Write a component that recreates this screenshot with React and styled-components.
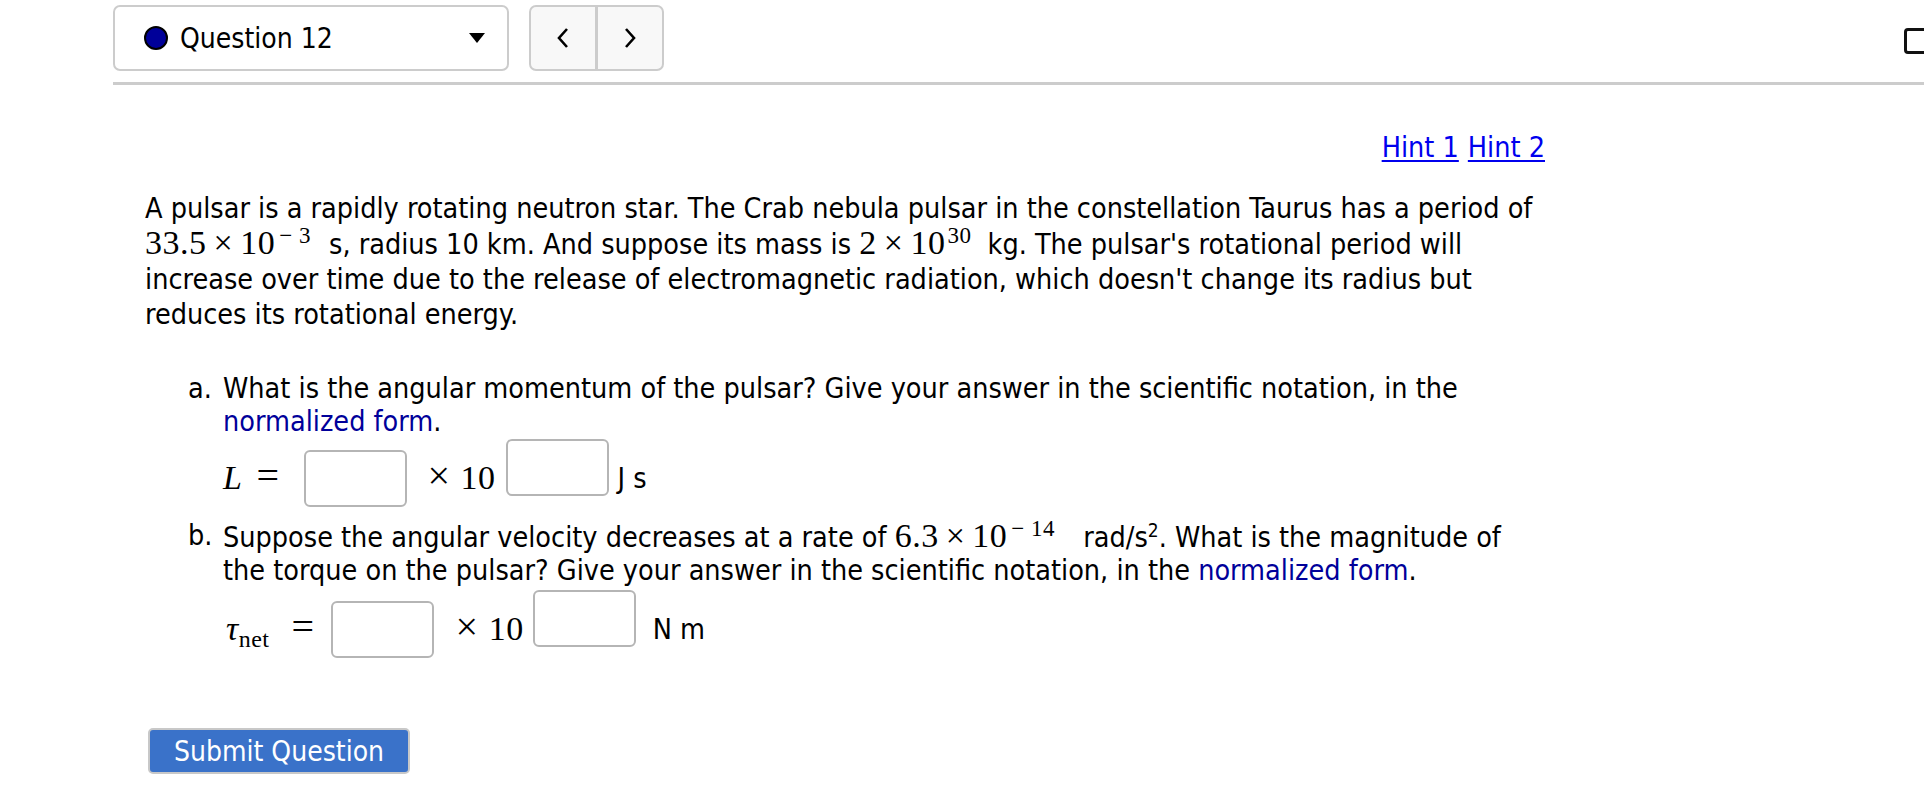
import React from 'react';
import styled, { createGlobalStyle } from 'styled-components';

const Global = createGlobalStyle`
  html, body {
    margin: 0;
    padding: 0;
    background: #fff;
    overflow: hidden;
  }
  body {
    font-family: "DejaVu Sans Condensed", "Noto Sans", sans-serif;
    color: #000;
  }
`;

const Page = styled.div`
  width: 1924px;
  height: 802px;
  overflow: hidden;
`;

const TopBar = styled.div`
  display: flex;
  align-items: flex-start;
  gap: 20px;
  margin-top: 5px;
  padding-left: 113px;
  height: 66px;
`;

const QuestionSelect = styled.div`
  display: flex;
  align-items: center;
  box-sizing: border-box;
  width: 396px;
  height: 66px;
  padding: 0 22px 0 29px;
  border: 2px solid #ccc;
  border-radius: 7px;
  background: #fff;
`;

const Dot = styled.span`
  width: 20px;
  height: 20px;
  border-radius: 50%;
  background: #000099;
  border: 2px solid #000;
  margin-right: 12px;
`;

const SelectLabel = styled.span`
  flex: 1;
  font-size: 28px;
`;

const NavGroup = styled.div`
  display: flex;
  box-sizing: border-box;
  height: 66px;
  border: 2px solid #ccc;
  border-radius: 7px;
  background: #f8f8f8;
  overflow: hidden;
`;

const NavButton = styled.div`
  display: flex;
  align-items: center;
  justify-content: center;
  width: 64px;
  & + & {
    border-left: 3px solid #ccc;
  }
`;

const EdgeButton = styled.div`
  flex: 0 0 auto;
  margin-left: auto;
  margin-top: 23px;
  margin-right: -180px;
  width: 194px;
  height: 20px;
  border: 3px solid #111;
  border-radius: 4px;
`;

const Rule = styled.div`
  margin: 11px 0 0 113px;
  height: 3px;
  background: #ccc;
`;

const Content = styled.div`
  width: 1400px;
  margin-left: 145px;
  font-size: 28.5px;
  line-height: 33px;
`;

const Hints = styled.div`
  margin-top: 46px;
  display: flex;
  justify-content: flex-end;
  gap: 9px;
  line-height: 34px;
`;

const HintLink = styled.a`
  color: #0000ee;
  text-decoration: underline;
  text-underline-offset: 3px;
  cursor: pointer;
`;

const Statement = styled.p`
  margin: 26px 0 0;
  white-space: nowrap;
  line-height: 35px;
`;

const Part = styled.div`
  display: grid;
  grid-template-columns: 35px auto;
  margin-left: 43px;
  margin-top: ${p => p.$top}px;
`;

const Marker = styled.span``;

const PartText = styled.div`
  white-space: nowrap;
`;

const Knowl = styled.span`
  color: #00009a;
`;

const Math = styled.span`
  font-family: "Liberation Serif", "Times New Roman", serif;
  font-size: 34px;
  line-height: 1;
  letter-spacing: 0.5px;
`;

const Op = styled.span`
  margin: 0 7px;
`;

const BigOp = styled.span`
  font-size: 40px;
  line-height: 0;
  margin-left: ${p => p.$before || 0}px;
  margin-right: ${p => p.$after || 0}px;
`;

const Sup = styled.sup`
  font-size: 23px;
  line-height: 0;
  vertical-align: 0.5em;
  margin-left: ${p => p.$gap || 2}px;
  margin-right: ${p => p.$after || 10}px;
`;

const TextSup = styled.sup`
  font-size: 19px;
  line-height: 0;
  vertical-align: 0.55em;
`;

const AnswerRow = styled.div`
  display: flex;
  align-items: center;
  margin-top: ${p => p.$top}px;
  margin-left: ${p => p.$left}px;
  height: 78px;
`;

const Box = styled.span`
  box-sizing: border-box;
  width: 103px;
  height: 57px;
  border: 2px solid #b5b5b5;
  border-radius: 6px;
  background: #fff;
  margin-left: ${p => p.$left}px;
  margin-bottom: ${p => (p.$raised ? 22 : 0)}px;
`;

const RowMath = styled(Math)`
  margin-left: ${p => p.$left || 0}px;
`;

const Unit = styled.span`
  margin-left: ${p => p.$left}px;
`;

const Sub = styled.sub`
  font-size: 24px;
  line-height: 0;
  vertical-align: -0.3em;
`;

const SubmitButton = styled.button`
  display: block;
  margin: 60px 0 0 3px;
  box-sizing: border-box;
  width: 262px;
  height: 46px;
  padding: 0;
  border: 2px solid #c8c8c8;
  border-radius: 5px;
  background: #3a72c9;
  color: #fff;
  font-family: inherit;
  font-size: 28px;
  cursor: pointer;
`;

const Chevron = ({ left }) => (
  <svg width="14" height="22" viewBox="0 0 14 22">
    <path
      d={left ? 'M11 2 L3 11 L11 20' : 'M3 2 L11 11 L3 20'}
      fill="none"
      stroke="#000"
      strokeWidth="2.6"
    />
  </svg>
);

const Caret = () => (
  <svg width="16" height="12" viewBox="0 0 16 12">
    <path d="M0 1 L16 1 L8 11 Z" fill="#000" />
  </svg>
);

export default function App() {
  return (
    <Page>
      <Global />
      <TopBar>
        <QuestionSelect>
          <Dot />
          <SelectLabel>Question 12</SelectLabel>
          <Caret />
        </QuestionSelect>
        <NavGroup>
          <NavButton><Chevron left /></NavButton>
          <NavButton><Chevron /></NavButton>
        </NavGroup>
        <EdgeButton />
      </TopBar>
      <Rule />
      <Content>
        <Hints>
          <HintLink>Hint 1</HintLink>
          <HintLink>Hint 2</HintLink>
        </Hints>
        <Statement>
          A pulsar is a rapidly rotating neutron star. The Crab nebula pulsar in the constellation Taurus has a period of
          <br />
          <Math>33.5<Op>×</Op>10<Sup $gap={4}>− 3</Sup></Math> s, radius 10 km. And suppose its mass is{' '}
          <Math>2<Op>×</Op>10<Sup $after={8}>30</Sup></Math> kg. The pulsar's rotational period will
          <br />
          increase over time due to the release of electromagnetic radiation, which doesn't change its radius but
          <br />
          reduces its rotational energy.
        </Statement>

        <Part $top={40}>
          <Marker>a.</Marker>
          <PartText>
            What is the angular momentum of the pulsar? Give your answer in the scientific notation, in the
            <br />
            <Knowl>normalized form</Knowl>.
          </PartText>
        </Part>
        <AnswerRow $top={1} $left={78}>
          <RowMath><i>L</i><BigOp $before={14}>=</BigOp></RowMath>
          <Box $left={25} />
          <RowMath $left={20}><BigOp $after={10}>×</BigOp>10</RowMath>
          <Box $left={10} $raised />
          <Unit $left={9}>J s</Unit>
        </AnswerRow>

        <Part $top={2}>
          <Marker>b.</Marker>
          <PartText>
            Suppose the angular velocity decreases at a rate of{' '}
            <Math>6.3<Op>×</Op>10<Sup $gap={4} $after={20}>− 14</Sup></Math> rad/s
            <TextSup>2</TextSup>. What is the magnitude of
            <br />
            the torque on the pulsar? Give your answer in the scientific notation, in the <Knowl>normalized form</Knowl>.
          </PartText>
        </Part>
        <AnswerRow $top={3} $left={81}>
          <RowMath><i>τ</i><Sub>net</Sub><BigOp $before={22}>=</BigOp></RowMath>
          <Box $left={16} />
          <RowMath $left={22}><BigOp $after={10}>×</BigOp>10</RowMath>
          <Box $left={9} $raised />
          <Unit $left={17}>N m</Unit>
        </AnswerRow>

        <SubmitButton>Submit Question</SubmitButton>
      </Content>
    </Page>
  );
}
